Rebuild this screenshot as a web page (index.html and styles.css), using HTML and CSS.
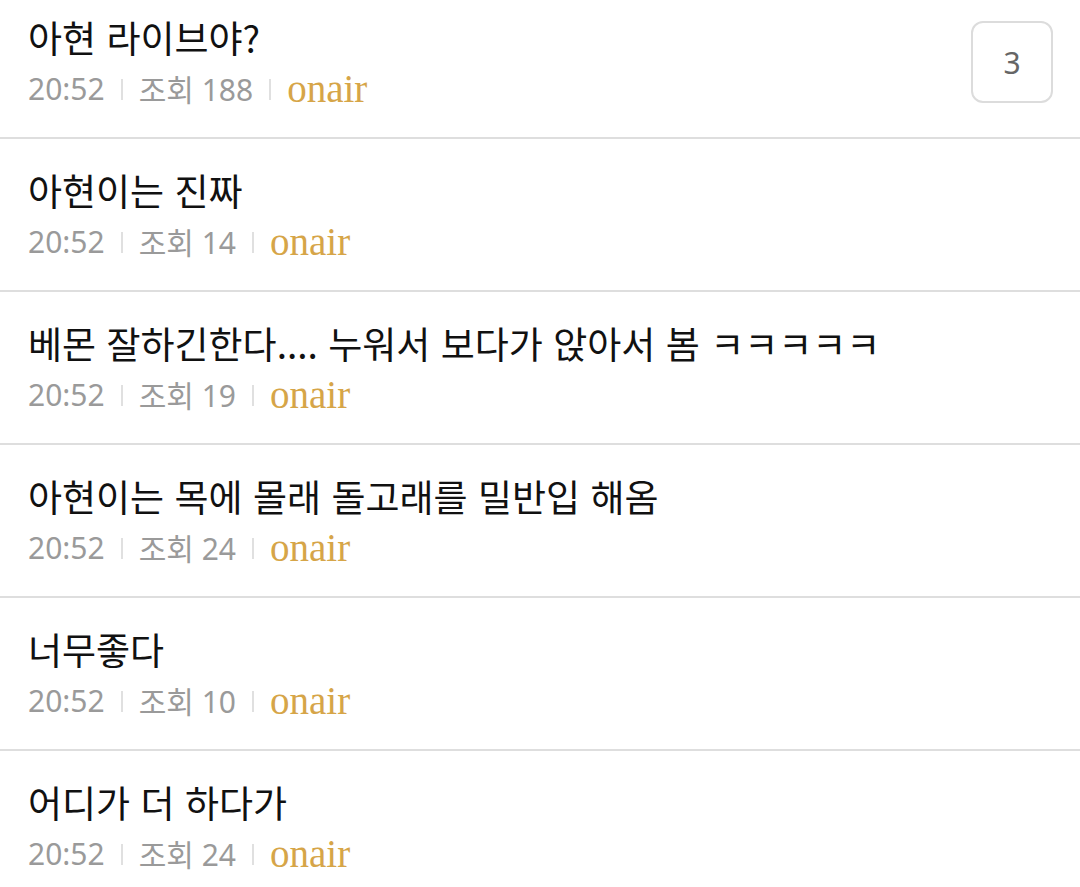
FILE: index.html
```html
<!DOCTYPE html>
<html lang="ko">
<head>
<meta charset="utf-8">
<link rel="stylesheet" href="styles.css">
</head>
<body>
<ul class="list">
  <li class="row">
    <div class="main">
      <div class="title">아현 라이브야?</div>
      <div class="meta"><span class="time">20:52</span><span class="bar"></span><span class="views">조회 188</span><span class="bar"></span><span class="cat">onair</span></div>
    </div>
    <div class="count">3</div>
  </li>
  <li class="row">
    <div class="main">
      <div class="title">아현이는 진짜</div>
      <div class="meta"><span class="time">20:52</span><span class="bar"></span><span class="views">조회 14</span><span class="bar"></span><span class="cat">onair</span></div>
    </div>
  </li>
  <li class="row">
    <div class="main">
      <div class="title">베몬 잘하긴한다.... 누워서 보다가 앉아서 봄 ㅋㅋㅋㅋㅋ</div>
      <div class="meta"><span class="time">20:52</span><span class="bar"></span><span class="views">조회 19</span><span class="bar"></span><span class="cat">onair</span></div>
    </div>
  </li>
  <li class="row">
    <div class="main">
      <div class="title">아현이는 목에 몰래 돌고래를 밀반입 해옴</div>
      <div class="meta"><span class="time">20:52</span><span class="bar"></span><span class="views">조회 24</span><span class="bar"></span><span class="cat">onair</span></div>
    </div>
  </li>
  <li class="row">
    <div class="main">
      <div class="title">너무좋다</div>
      <div class="meta"><span class="time">20:52</span><span class="bar"></span><span class="views">조회 10</span><span class="bar"></span><span class="cat">onair</span></div>
    </div>
  </li>
  <li class="row">
    <div class="main">
      <div class="title">어디가 더 하다가</div>
      <div class="meta"><span class="time">20:52</span><span class="bar"></span><span class="views">조회 24</span><span class="bar"></span><span class="cat">onair</span></div>
    </div>
  </li>
</ul>
</body>
</html>
```
FILE: styles.css
```css
html, body {
  margin: 0;
  padding: 0;
  background: #ffffff;
}
body {
  font-family: "Noto Sans", "Noto Sans CJK KR", sans-serif;
  overflow: hidden;
}
.list {
  list-style: none;
  margin: -14px 0 0 0;
  padding: 0;
}
.row {
  box-sizing: border-box;
  display: flex;
  align-items: flex-start;
  height: 153px;
  padding: 28px 27px 0 28px;
  border-bottom: 2px solid #dedede;
}
.main {
  flex: 1;
  min-width: 0;
}
.title {
  font-family: "Noto Sans CJK KR", sans-serif;
  font-size: 37px;
  line-height: 46px;
  color: #111111;
  white-space: nowrap;
}
.meta {
  display: flex;
  align-items: center;
  margin-top: 8px;
  height: 40px;
  font-size: 30px;
  color: #9a9a9a;
  white-space: nowrap;
}
.bar {
  width: 2px;
  height: 21px;
  background: #e0e0e0;
  margin: 2px 16px 0;
}
.cat {
  font-family: "Liberation Serif", serif;
  font-size: 39px;
  color: #d6a548;
}
.count {
  width: 78px;
  height: 78px;
  margin-top: 7px;
  border: 2px solid #dcdcdc;
  border-radius: 12px;
  display: flex;
  align-items: center;
  justify-content: center;
  font-size: 30px;
  color: #666666;
}
```
